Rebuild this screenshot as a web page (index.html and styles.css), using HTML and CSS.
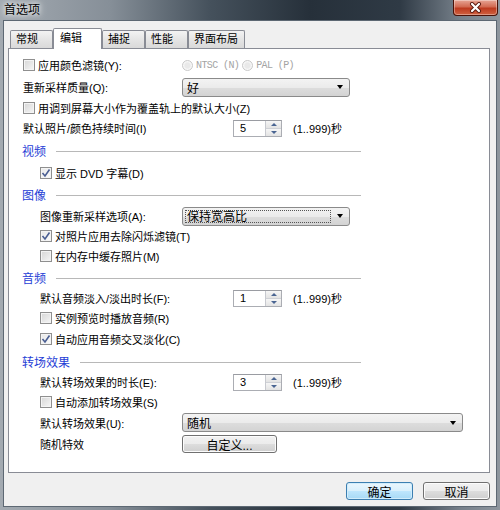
FILE: index.html
```html
<!DOCTYPE html>
<html lang="zh-CN">
<head>
  <meta charset="UTF-8" />
  <title>首选项</title>
  <link rel="stylesheet" href="styles.css">
</head>
<body>

<div class="window">
  <div class="titlebar">
    <span class="title">首选项</span>
    <div class="close">
      <svg width="13" height="11" viewBox="0 0 13 11">
        <path d="M3 2 L10 9 M10 2 L3 9" stroke="#5a1a10" stroke-width="4" stroke-linecap="round"/>
        <path d="M3 2 L10 9 M10 2 L3 9" stroke="#fff" stroke-width="2.2" stroke-linecap="round"/>
      </svg>
    </div>
  </div>

  <div class="client">
    <div class="tabs">
      <div class="tab">常规</div>
      <div class="tab active">编辑</div>
      <div class="tab">捕捉</div>
      <div class="tab">性能</div>
      <div class="tab">界面布局</div>
    </div>

    <div class="panel">
      <!-- general -->
      <div class="row">
        <label class="check lbl"><span class="box"></span>应用颜色滤镜(Y):</label>
        <label class="radio off"><span class="dot"></span>NTSC (N)</label>
        <label class="radio off"><span class="dot"></span>PAL (P)</label>
      </div>
      <div class="row">
        <span class="lbl">重新采样质量(Q):</span>
        <div class="select"><span class="val">好</span><span class="arrow"></span></div>
      </div>
      <div class="row">
        <label class="check"><span class="box"></span>用调到屏幕大小作为覆盖轨上的默认大小(Z)</label>
      </div>
      <div class="row">
        <span class="lbl long">默认照片/颜色持续时间(I)</span>
        <div class="spin"><span class="num">5</span><span class="btns"><i class="up"></i><i class="down"></i></span></div>
        <span class="range">(1..999)秒</span>
      </div>

      <!-- video -->
      <div class="sect">视频</div>
      <div class="row ind">
        <label class="check"><span class="box on"><svg width="10" height="10" viewBox="0 0 10 10"><path d="M1.5 5 L4 8 L8.5 1.5" fill="none" stroke="#4a5e92" stroke-width="1.6"/></svg></span>显示 DVD 字幕(D)</label>
      </div>

      <!-- image -->
      <div class="sect">图像</div>
      <div class="row ind">
        <span class="lbl">图像重新采样选项(A):</span>
        <div class="select focus"><span class="val">保持宽高比</span><span class="arrow"></span></div>
      </div>
      <div class="row ind">
        <label class="check"><span class="box on"><svg width="10" height="10" viewBox="0 0 10 10"><path d="M1.5 5 L4 8 L8.5 1.5" fill="none" stroke="#4a5e92" stroke-width="1.6"/></svg></span>对照片应用去除闪烁滤镜(T)</label>
      </div>
      <div class="row ind">
        <label class="check"><span class="box"></span>在内存中缓存照片(M)</label>
      </div>

      <!-- audio -->
      <div class="sect">音频</div>
      <div class="row ind">
        <span class="lbl long">默认音频淡入/淡出时长(F):</span>
        <div class="spin"><span class="num">1</span><span class="btns"><i class="up"></i><i class="down"></i></span></div>
        <span class="range">(1..999)秒</span>
      </div>
      <div class="row ind">
        <label class="check"><span class="box"></span>实例预览时播放音频(R)</label>
      </div>
      <div class="row ind">
        <label class="check"><span class="box on"><svg width="10" height="10" viewBox="0 0 10 10"><path d="M1.5 5 L4 8 L8.5 1.5" fill="none" stroke="#4a5e92" stroke-width="1.6"/></svg></span>自动应用音频交叉淡化(C)</label>
      </div>

      <!-- transitions -->
      <div class="sect">转场效果</div>
      <div class="row ind">
        <span class="lbl long">默认转场效果的时长(E):</span>
        <div class="spin"><span class="num">3</span><span class="btns"><i class="up"></i><i class="down"></i></span></div>
        <span class="range">(1..999)秒</span>
      </div>
      <div class="row ind">
        <label class="check"><span class="box"></span>自动添加转场效果(S)</label>
      </div>
      <div class="row ind">
        <span class="lbl">默认转场效果(U):</span>
        <div class="select full"><span class="val">随机</span><span class="arrow"></span></div>
      </div>
      <div class="row ind">
        <span class="lbl">随机特效</span>
        <button class="btn custom">自定义...</button>
      </div>
    </div>

    <div class="buttons">
      <button class="btn default">确定</button>
      <button class="btn">取消</button>
    </div>
  </div>
</div>

</body>
</html>
```

FILE: styles.css
```css
* {
  box-sizing: border-box;
}
body {
  margin: 0;
  font-family: "Liberation Sans", "Noto Sans CJK SC", sans-serif;
  font-size: 11px;
  color: #000;
}

/* window frame */
.window {
  width: 500px;
  height: 510px;
  display: flex;
  flex-direction: column;
  padding: 0 3px 3px;
  background: linear-gradient(90deg, #a3aab1 0%, #868f98 22%, #45515c 42%, #26303a 62%, #2f3a45 80%, #76808a 92%, #8e969e 100%);
}
.titlebar {
  height: 20px;
  margin: 0 -3px;
  display: flex;
  justify-content: space-between;
  align-items: flex-start;
}
.title {
  padding: 3px 0 0 4px;
  font-size: 12px;
  line-height: 14px;
  text-shadow: 0 0 5px #fff, 0 0 8px #fff;
}
.close {
  width: 45px;
  height: 16px;
  margin-right: 2px;
  display: flex;
  align-items: center;
  justify-content: center;
  border: 1px solid #4a1208;
  border-top: none;
  border-radius: 0 0 4px 4px;
  background: linear-gradient(#e7a595, #d26a52 45%, #bd3a1f 55%, #cf6241);
  box-shadow: inset 0 0 0 1px rgba(255,255,255,0.35);
}

.client {
  flex: 1;
  display: flex;
  flex-direction: column;
  background: #f0f0f0;
  border: 1px solid #5d6873;
  padding: 7px 6px 0 4px;
}

/* tabs */
.tabs {
  height: 20px;
  display: flex;
  align-items: flex-end;
  padding-left: 2px;
}
.tab {
  position: relative;
  min-width: 43px;
  height: 18px;
  padding: 0 6px 0 5px;
  line-height: 17px;
  border: 1px solid #898c95;
  border-bottom: none;
  border-radius: 2px 2px 0 0;
  background: linear-gradient(#f3f3f3, #e5e5e5 50%, #d9d9d9);
}
.tab.active {
  min-width: 49px;
  height: 21px;
  margin-bottom: -1px;
  padding-left: 6px;
  line-height: 18px;
  background: #fff;
  z-index: 1;
}

.panel {
  flex: 1;
  background: #fff;
  border: 1px solid #898c95;
  padding: 5px 0 0 14px;
  display: grid;
  grid-template-rows: 22px 22px 19px 22px 23px 21px 23px 20px 19px 22px 21px 20px 20px 22px 22px 20px 20px 21px 21px;
  align-content: start;
}

.row {
  display: flex;
  align-items: center;
  white-space: nowrap;
}
.row.ind {
  padding-left: 17px;
}
.lbl {
  width: 159px;
  flex: none;
}
.ind .lbl {
  width: 142px;
}
.lbl.long {
  width: 210px;
}
.ind .lbl.long {
  width: 193px;
}

/* section headings */
.sect {
  width: 339px;
  display: flex;
  align-items: center;
  margin-left: -1px;
  color: #1f3ed6;
  font-size: 12px;
}
.sect::after {
  content: "";
  flex: 1;
  margin: 2px 0 0 10px;
  border-top: 1px solid #b8b8b8;
}

/* checkbox / radio */
.check {
  display: flex;
  align-items: center;
}
.box {
  width: 12px;
  height: 12px;
  margin-right: 3px;
  display: flex;
  align-items: center;
  justify-content: center;
  border: 1px solid #8f8f8f;
  background: linear-gradient(135deg, #d6d6d6, #f6f6f6);
  box-shadow: inset 0 0 0 1px #f4f4f4;
}
.box.on {
  background: linear-gradient(135deg, #e8e8e8, #fbfbfb);
}
.radio {
  display: flex;
  align-items: center;
  margin-right: 3px;
  font-family: "Liberation Mono", "Noto Sans CJK SC", monospace;
  font-size: 10px;
  letter-spacing: -0.6px;
}
.radio.off {
  color: #a3a3a3;
}
.dot {
  width: 11px;
  height: 11px;
  margin-right: 3px;
  border-radius: 50%;
  border: 1px solid #c9c9c9;
  background: radial-gradient(#e9e9e9 40%, #f7f7f7 60%);
}

/* dropdowns */
.select {
  width: 168px;
  height: 19px;
  display: flex;
  align-items: center;
  border: 1px solid #8a8a8a;
  border-radius: 3px;
  background: linear-gradient(#f3f3f3, #ebebeb 50%, #dddddd 51%, #d3d3d3);
}
.select.full {
  width: 281px;
}
.select .val {
  flex: 1;
  padding-left: 4px;
  font-size: 12px;
}
.select.focus .val {
  margin: 2px 0 2px 2px;
  padding-left: 1px;
  height: 13px;
  line-height: 12px;
  border: 1px dotted #555;
}
.arrow {
  width: 18px;
  height: 100%;
  display: flex;
  align-items: center;
  justify-content: center;
}
.arrow::after {
  content: "";
  border-left: 3.5px solid transparent;
  border-right: 3.5px solid transparent;
  border-top: 4px solid #000;
}

/* spinners */
.spin {
  width: 49px;
  height: 17px;
  display: flex;
  border: 1px solid #abadb3;
  border-top-color: #9a9ca2;
  background: #fff;
}
.num {
  flex: 1;
  padding-left: 6px;
  line-height: 15px;
}
.btns {
  width: 16px;
  display: flex;
  flex-direction: column;
  border-left: 1px solid #c7c9cf;
}
.btns i {
  flex: 1;
  display: flex;
  align-items: center;
  justify-content: center;
  background: linear-gradient(#f6f6f6, #e3e3e3);
}
.btns i + i {
  border-top: 1px solid #cfd1d6;
}
.up::after {
  content: "";
  border-left: 3px solid transparent;
  border-right: 3px solid transparent;
  border-bottom: 3px solid #4a6592;
}
.down::after {
  content: "";
  border-left: 3px solid transparent;
  border-right: 3px solid transparent;
  border-top: 3px solid #4a6592;
}
.range {
  margin-left: 11px;
}

/* buttons */
.btn {
  height: 18px;
  padding: 0;
  font-family: inherit;
  font-size: 12px;
  color: #000;
  border: 1px solid #707070;
  border-radius: 3px;
  background: linear-gradient(#f2f2f2, #ebebeb 50%, #dddddd 51%, #cfcfcf);
  box-shadow: inset 0 0 0 1px #fcfcfc;
}
.btn.custom {
  width: 95px;
}
.buttons {
  height: 18px;
  margin: 9px 0 6px;
  display: flex;
  justify-content: flex-end;
  gap: 10px;
}
.buttons .btn {
  width: 67px;
}
.btn.default {
  border-color: #3c7fb1;
  background: linear-gradient(#eaf6fd, #d9f0fc 50%, #bee6fd 51%, #a7d9f5);
  box-shadow: inset 0 0 0 1px #d2edfb;
}
```
